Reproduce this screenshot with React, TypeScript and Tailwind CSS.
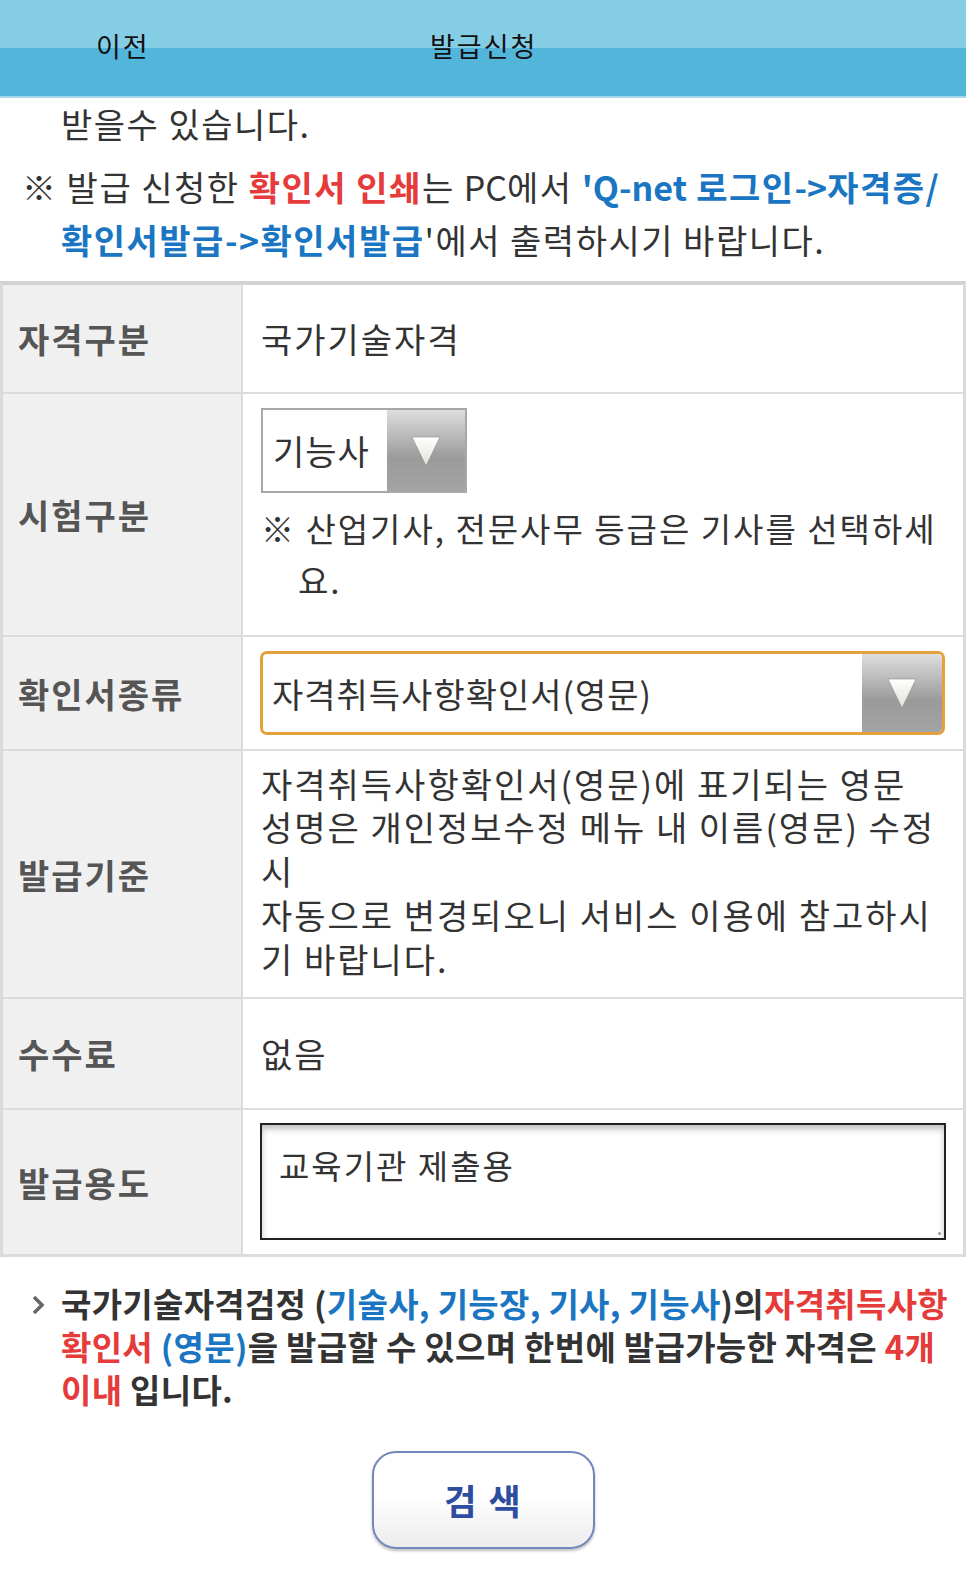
import React from "react";

function Triangle() {
  return (
    <svg width="34" height="36" viewBox="0 0 34 36">
      <defs>
        <linearGradient id="tri" x1="0" y1="0" x2="0" y2="1">
          <stop offset="0" stopColor="#ffffff" />
          <stop offset="1" stopColor="#e4e0d8" />
        </linearGradient>
      </defs>
      <path d="M3 4 L31 4 L17 33 Z" fill="url(#tri)" stroke="#8a8a8a" strokeWidth="0.6" />
    </svg>
  );
}

function Label({ text }: { text: string }) {
  return (
    <div className="w-[238px] shrink-0 bg-[#f0f0f0] pl-[15px] flex items-center text-[34px] font-bold text-[#555] tracking-[2px]">
      {text}
    </div>
  );
}

export default function App() {
  return (
    <div className="w-[966px] min-h-[1587px] bg-white font-['Noto_Sans_CJK_KR',sans-serif] text-[#333]">
      {/* top bar */}
      <div className="h-[98px] bg-[linear-gradient(to_bottom,#85cde4_48px,#52b5da_48px)] border-b-2 border-[#a7d9ec] flex items-center text-[27px] text-[#111] pb-[4px] tracking-[2px]">
        <span className="ml-[96px] w-[334px]">이전</span>
        <span>발급신청</span>
      </div>

      {/* notice */}
      <div className="pb-[15px]">
        <p className="pl-[61px] text-[34px] leading-[52px] tracking-[1.5px]">받을수 있습니다.</p>
        <p className="mt-[10px] pl-[61px] -indent-[39px] text-[34px] leading-[53px] whitespace-nowrap tracking-[1.5px]">
          ※ 발급 신청한 <b className="text-[#e53b3b]">확인서 인쇄</b>는 <span className="tracking-[0px]">PC</span>에서{" "}
          <b className="text-[#1a76c2]">
            <span className="tracking-[0px]">'Q-net</span> 로그인<span className="tracking-[0px]">-&gt;</span>자격증/
          </b>
          <br />
          <b className="text-[#1a76c2]">확인서발급-&gt;확인서발급</b>'에서 출력하시기 바랍니다.
        </p>
      </div>

      {/* table */}
      <div className="border-t-[4px] border-[#d3d3d3] border-x-[3px] border-x-[#dadada]">
        <div className="flex h-[109px] border-b-2 border-[#dcdcdc]">
          <Label text="자격구분" />
          <div className="flex-1 border-l-2 border-[#dcdcdc] pl-[18px] flex items-center text-[34px] tracking-[2px]">
            국가기술자격
          </div>
        </div>

        <div className="flex h-[243px] border-b-2 border-[#dcdcdc]">
          <Label text="시험구분" />
          <div className="flex-1 border-l-2 border-[#dcdcdc] pl-[18px] pt-[14px]">
            <div className="flex w-[206px] h-[85px] border-2 border-[#a8a8a8]">
              <div className="flex-1 pl-[10px] flex items-center text-[34px] tracking-[1px]">기능사</div>
              <div className="w-[78px] bg-[linear-gradient(to_bottom,#dedede,#9a9a9a_60%,#a4a4a4)] flex items-center justify-center">
                <Triangle />
              </div>
            </div>
            <p className="mt-[9px] pl-[37px] -indent-[37px] text-[33px] leading-[52px] whitespace-nowrap tracking-[2px]">
              ※ 산업기사, 전문사무 등급은 기사를 선택하세
              <br />
              요.
            </p>
          </div>
        </div>

        <div className="flex h-[114px] border-b-2 border-[#dcdcdc]">
          <Label text="확인서종류" />
          <div className="flex-1 border-l-2 border-[#dcdcdc] pl-[17px] pr-[17px] flex items-center">
            <div className="flex w-[685px] h-[84px] border-[3px] border-[#e4a13b] rounded-[7px] overflow-hidden">
              <div className="flex-1 pl-[9px] flex items-center text-[34px] tracking-[1px]">자격취득사항확인서(영문)</div>
              <div className="w-[80px] bg-[linear-gradient(to_bottom,#dedede,#9a9a9a_60%,#a4a4a4)] flex items-center justify-center">
                <Triangle />
              </div>
            </div>
          </div>
        </div>

        <div className="flex h-[248px] border-b-2 border-[#dcdcdc]">
          <Label text="발급기준" />
          <div className="flex-1 border-l-2 border-[#dcdcdc] pl-[18px] flex items-center">
            <p className="text-[34px] leading-[43.7px] whitespace-nowrap tracking-[2px] pb-[6px]">
              자격취득사항확인서(영문)에 표기되는 영문
              <br />
              성명은 개인정보수정 메뉴 내 이름(영문) 수정
              <br />
              시
              <br />
              자동으로 변경되오니 서비스 이용에 참고하시
              <br />
              기 바랍니다.
            </p>
          </div>
        </div>

        <div className="flex h-[111px] border-b-2 border-[#dcdcdc]">
          <Label text="수수료" />
          <div className="flex-1 border-l-2 border-[#dcdcdc] pl-[18px] flex items-center text-[34px] tracking-[2px]">
            없음
          </div>
        </div>

        <div className="flex h-[147px] border-b-[3px] border-[#dcdcdc]">
          <Label text="발급용도" />
          <div className="flex-1 border-l-2 border-[#dcdcdc] pl-[17px] pr-[17px] pt-[13px]">
            <div className="h-[117px] border-2 border-[#222] shadow-[inset_0_4px_6px_rgba(0,0,0,0.25)] pl-[17px] pt-[18px] text-[33px] leading-[44px] tracking-[2px] relative">
              교육기관 제출용
              <span className="absolute right-[3px] bottom-[3px] w-[3px] h-[3px] rounded-full bg-[#999]" />
            </div>
          </div>
        </div>
      </div>

      {/* bottom note */}
      <div className="mt-[25px] flex">
        <div className="w-[61px] shrink-0 pl-[30px] pt-[12px]">
          <svg width="16" height="22" viewBox="0 0 16 22">
            <path d="M4 3 L12 11 L4 19" fill="none" stroke="#666" strokeWidth="3.5" />
          </svg>
        </div>
        <p className="text-[33px] leading-[43px] font-bold text-[#333] whitespace-nowrap tracking-[0.3px]">
          국가기술자격검정 (<span className="text-[#1a76c2]">기술사, 기능장, 기사, 기능사</span>)의
          <span className="text-[#e53b3b]">자격취득사항</span>
          <br />
          <span className="text-[#e53b3b]">확인서 </span>
          <span className="text-[#1a76c2]">(영문)</span>을 발급할 수 있으며 한번에 발급가능한 자격은{" "}
          <span className="text-[#e53b3b]">4개</span>
          <br />
          <span className="text-[#e53b3b]">이내</span> 입니다.
        </p>
      </div>

      {/* button */}
      <div className="mt-[40px] flex justify-center">
        <button className="ml-[1px] w-[223px] h-[98px] rounded-[24px] border-2 border-[#7486bb] bg-[linear-gradient(to_bottom,#ffffff_45%,#ececec)] shadow-[0_2px_3px_rgba(0,0,0,0.25)] text-[35px] font-bold text-[#2e4d9e] tracking-[2px]">
          검 색
        </button>
      </div>
    </div>
  );
}
